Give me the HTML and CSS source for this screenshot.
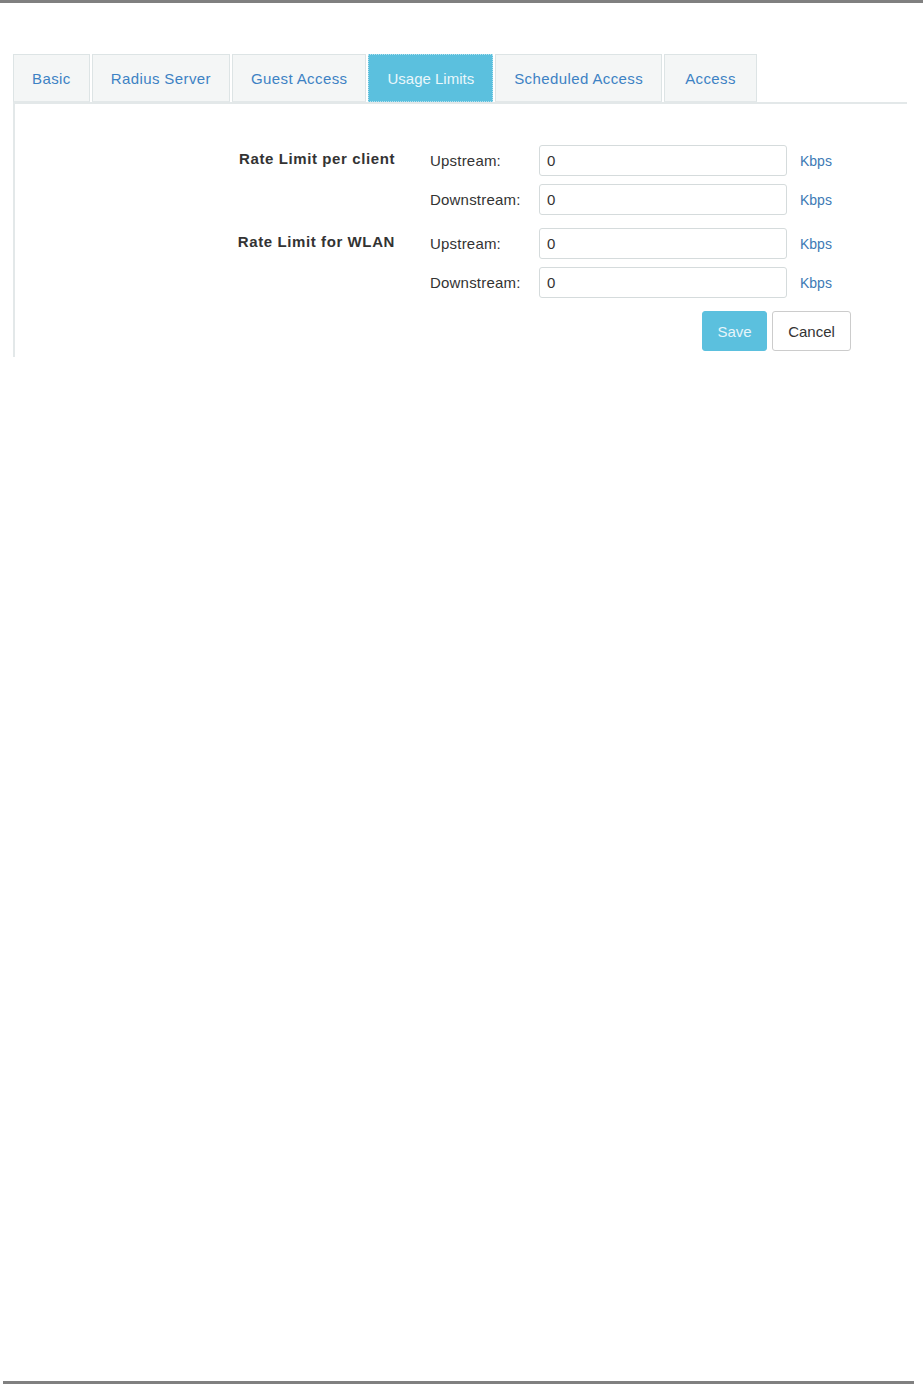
FILE: index.html
```html
<!DOCTYPE html>
<html lang="en">
<head>
    <meta charset="UTF-8">
    <title>Usage Limits</title>
    <link rel="stylesheet" href="styles.css">
</head>
<body>
    <div class="top-rule"></div>

    <div class="container">
        <ul class="tabs">
            <li class="tab">Basic</li>
            <li class="tab">Radius Server</li>
            <li class="tab">Guest Access</li>
            <li class="tab active">Usage Limits</li>
            <li class="tab">Scheduled Access</li>
            <li class="tab tab-last">Access</li>
        </ul>

        <div class="tab-body">
            <div class="group">
                <div class="group-label">Rate Limit per client</div>
                <label class="field-label">Upstream:</label>
                <input class="field" type="text" value="0">
                <span class="unit">Kbps</span>
                <label class="field-label">Downstream:</label>
                <input class="field" type="text" value="0">
                <span class="unit">Kbps</span>
            </div>

            <div class="group">
                <div class="group-label">Rate Limit for WLAN</div>
                <label class="field-label">Upstream:</label>
                <input class="field" type="text" value="0">
                <span class="unit">Kbps</span>
                <label class="field-label">Downstream:</label>
                <input class="field" type="text" value="0">
                <span class="unit">Kbps</span>
            </div>

            <div class="actions">
                <button class="btn btn-save">Save</button>
                <button class="btn btn-cancel">Cancel</button>
            </div>
        </div>
    </div>

    <div class="bottom-rule"></div>
</body>
</html>
```

FILE: styles.css
```css
html, body {
    height: 100%;
}
body {
    display: flex;
    flex-direction: column;
    margin: 0;
    padding: 0;
    font-family: "Liberation Sans", Arial, sans-serif;
    background-color: #ffffff;
    color: #333333;
}
.top-rule {
    height: 3px;
    background-color: #808080;
}
.bottom-rule {
    height: 3px;
    margin: auto 9px 0 3px;
    background-color: #808080;
}
.container {
    margin: 51px 16px 0 13px;
}
.tabs {
    display: flex;
    list-style: none;
    margin: 0;
    padding: 0;
    border-bottom: 2px solid #e3e8e9;
}
.tab {
    display: flex;
    align-items: center;
    height: 46px;
    padding: 0 18px;
    margin-right: 2px;
    font-size: 15px;
    letter-spacing: 0.4px;
    color: #3d82c4;
    background-color: #f4f6f6;
    border: 1px solid #dde4e5;
    border-bottom-color: #e3e8e9;
}
.tab.active {
    color: #e9f7fb;
    background-color: #5bc0de;
    border: 1px dotted #b5e2ef;
    letter-spacing: 0;
}
.tab.tab-last {
    padding: 0 20px;
}
.tab-body {
    border-left: 2px solid #e3e8e9;
    padding: 41px 0 6px 0;
}
.group {
    display: grid;
    grid-template-columns: 415px 109px 248px auto;
    grid-auto-rows: 31px;
    row-gap: 8px;
    align-items: center;
    margin-bottom: 13px;
}
.group-label {
    grid-row: span 2;
    align-self: start;
    padding: 5px 35px 0 0;
    text-align: right;
    font-size: 15px;
    font-weight: bold;
    letter-spacing: 0.6px;
}
.field-label {
    font-size: 15px;
    letter-spacing: 0.2px;
    color: #333333;
}
.field {
    box-sizing: border-box;
    width: 248px;
    height: 31px;
    padding: 0 7px;
    font-family: "Liberation Sans", Arial, sans-serif;
    font-size: 15px;
    color: #333333;
    border: 1px solid #d5dbdc;
    border-radius: 3px;
}
.unit {
    padding-left: 13px;
    font-size: 14px;
    color: #3d7ab5;
}
.actions {
    display: flex;
    justify-content: flex-end;
    gap: 5px;
    padding-right: 56px;
}
.btn {
    height: 40px;
    font-family: "Liberation Sans", Arial, sans-serif;
    font-size: 15px;
    border-radius: 3px;
    cursor: pointer;
}
.btn-save {
    width: 65px;
    color: #e6f5fa;
    background-color: #5bc0de;
    border: 1px solid #5bc0de;
}
.btn-cancel {
    width: 79px;
    color: #333333;
    background-color: #ffffff;
    border: 1px solid #cccccc;
}
```
